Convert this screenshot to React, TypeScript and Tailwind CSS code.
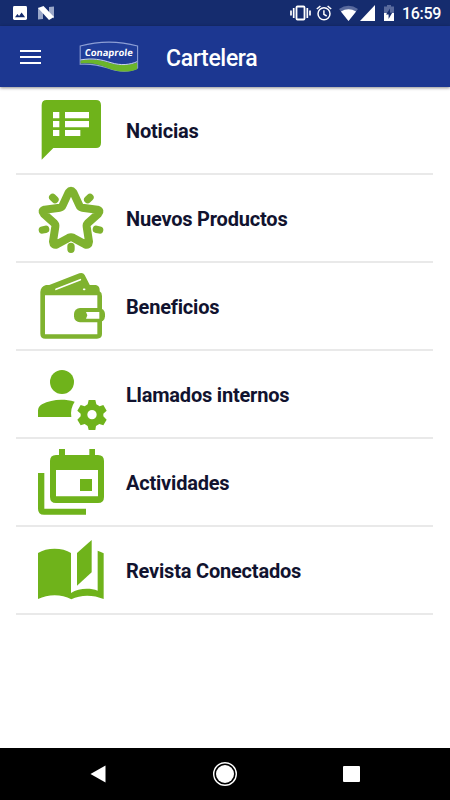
import type { ReactNode } from "react";

interface MenuItem {
  label: string;
  icon: ReactNode;
}

const GREEN = "#6fb31b";
const OLIVE = "#7fb22f";

function NewsIcon() {
  return (
    <g fill={GREEN}>
      <path d="M80 30H228Q243 30 243 46V158Q243 174 228 174H100L65 209V46Q65 30 80 30Z" />
      <path
        fill="#fff"
        d="M99 66h19v19H99zM135 66h72v19h-72zM99 93h19v19H99zM135 93h72v19h-72zM99 120h19v18H99zM135 120h46v18h-46z"
      />
    </g>
  );
}

function StarIcon() {
  return (
    <g fill="none" stroke={OLIVE} strokeLinecap="round" strokeLinejoin="round">
      <path
        strokeWidth="24"
        d="M146 43Q153 34 160 43L178 82Q180 88 187 89L232 95Q243 98 235 107L203 136Q199 140 200 146L207 191Q206 204 195 199L159 179Q153 176 147 179L111 199Q100 204 99 191L106 146Q107 140 103 136L71 107Q63 98 74 95L119 89Q126 88 128 82Z"
      />
      <path
        strokeWidth="22"
        d="M98 58l7 7M210 58l-7 7M67 156l10-2M239 156l-10-2M153 205v9"
      />
    </g>
  );
}

function WalletIcon() {
  return (
    <g fill={OLIVE}>
      <path
        fillRule="evenodd"
        d="M78 57H228Q239 60 239 72V76Q246 80 246 90V204Q246 218 231 218H76Q61 218 61 203V78Q62 62 78 57ZM75 88V205H232V88Z"
      />
      <path d="M80 60L178 22Q189 18 194 27L212 62L232 80H80Z" />
      <path
        d="M108 70L181 41M191 70h3"
        fill="none"
        stroke="#fff"
        strokeWidth="5"
        strokeLinecap="round"
      />
      <rect x="162" y="126" width="93" height="43" rx="18" />
      <path fill="#fff" d="M198 138h40v20h-40l4-10z" />
    </g>
  );
}

function StaffIcon() {
  return (
    <g fill={GREEN}>
      <circle cx="126" cy="84" r="36" />
      <path d="M54 189V170Q54 158 66 151C94 136 130 133 164 143Q150 164 154 189Z" />
      <path
        fillRule="evenodd"
        d="M206 138h20l3 13 10 6 11-4 10 17-10 9v8l10 10-10 17-12-4-10 6-2 12h-20l-3-12-9-6-12 4-10-17 10-10v-8l-10-9 10-17 12 4 9-6ZM216 168a14 14 0 1 0 0 28a14 14 0 1 0 0-28Z"
      />
    </g>
  );
}

function EventsIcon() {
  return (
    <g fill={GREEN}>
      <path
        fillRule="evenodd"
        d="M117 21h18v18h73V21h17v18h9Q252 39 252 57V165Q252 183 234 183H108Q90 183 90 165V57Q90 39 108 39h9ZM108 84v79H234V84Z"
      />
      <path d="M180 111h36v36h-36z" />
      <path d="M54 93h19v107H198v18H72Q54 218 54 200Z" />
    </g>
  );
}

function MagazineIcon() {
  return (
    <g fill={GREEN}>
      <path d="M54 69C80 52 128 52 153 69V189C176 174 210 173 233 182V62Q243 65 251 70V207C220 194 182 193 154 208C124 191 84 192 54 207Z" />
      <path d="M171 69L215 30V127L171 167Z" />
    </g>
  );
}

const items: MenuItem[] = [
  { label: "Noticias", icon: <NewsIcon /> },
  { label: "Nuevos Productos", icon: <StarIcon /> },
  { label: "Beneficios", icon: <WalletIcon /> },
  { label: "Llamados internos", icon: <StaffIcon /> },
  { label: "Actividades", icon: <EventsIcon /> },
  { label: "Revista Conectados", icon: <MagazineIcon /> },
];

function StatusBar() {
  return (
    <div className="flex h-[26px] items-center bg-[#152c6e] text-white">
      <svg className="ml-[13px] h-[14px] w-[14px]" viewBox="0 0 14 14">
        <rect width="14" height="14" rx="1.4" fill="#fff" />
        <path d="M2 11.3 4.4 8l1.7 2.1L8.6 6.6l3.5 4.7Z" fill="#152c6e" />
      </svg>
      <svg className="ml-[11px] h-[14px] w-4" viewBox="0 0 16 14">
        <path d="M0 1.5 5 5v8L0 13.5ZM11 1l5-.5v12L11 8Z" fill="#9aa7c8" />
        <path d="M0 2 5.5 0 16 11 11 14Z" fill="#fff" />
      </svg>
      <svg
        className="ml-auto h-4 w-[21px]"
        viewBox="0 0 21 16"
        fill="none"
        stroke="#fff"
      >
        <rect x="6.5" y="1.5" width="8" height="13" rx="1" strokeWidth="1.8" />
        <path d="M3.7 3v10M17.3 3v10M1 5.5v5M20 5.5v5" strokeWidth="1.7" />
      </svg>
      <svg
        className="ml-[5px] h-4 w-4"
        viewBox="0 0 16 16"
        fill="none"
        stroke="#fff"
        strokeWidth="1.5"
      >
        <circle cx="8" cy="8.8" r="6" />
        <path d="M7.9 5.3v4l2.8 1.7M.8 4 4.4 1M15.2 4 11.6 1" />
      </svg>
      <svg className="ml-[7px] h-4 w-[19px]" viewBox="0 0 19 16">
        <path d="M9.5 16 0 4Q9.5-2.5 19 4Z" fill="#596a9d" />
        <path d="M9.5 16 1.9 6.5Q9.5 1.8 17.1 6.5Z" fill="#fff" />
      </svg>
      <svg className="ml-[2px] h-4 w-[15px]" viewBox="0 0 15 16">
        <path d="M15 0v16H0Z" fill="#fff" />
      </svg>
      <svg className="ml-[9px] h-4 w-[10px]" viewBox="0 0 10 16">
        <path d="M3 0h4v1.6h3V8H0V1.6h3Z" fill="#596a9d" />
        <path d="M0 8h10v8H0Z" fill="#fff" />
        <path d="M6 3.5 2 9.5h2.6V14L8.2 7.7H6Z" fill="#152c6e" />
      </svg>
      <span className="mr-[9px] ml-[8px] w-[39px] pt-[2px] text-[16px] leading-none font-medium tracking-[-0.02em] whitespace-nowrap">
        16:59
      </span>
    </div>
  );
}

function Logo() {
  return (
    <svg className="ml-[38px] h-[32px] w-[60px]" viewBox="0 0 60 32">
      <path
        d="M1.2 5Q30-2.8 58.6 5V27C50 31.5 40 31 29 27C18 23.5 10 22.6 1.2 23.3Z"
        fill="#203d99"
        stroke="#8d9fd5"
        strokeWidth="1.1"
      />
      <path
        d="M1.6 19.5C14 17.5 22 19 32 22.3C42 25 51 24 58.2 21.5V28.3C49 32 39 31 29 27.2C18 22.8 10 21.8 1.6 22.6Z"
        fill="#6bb52b"
      />
      <path
        d="M1.6 18.9C14 16.9 22 18.5 32 21.7C42 24.8 51 23.8 58 20.7"
        fill="none"
        stroke="#dfe7f4"
        strokeWidth="0.9"
      />
      <text
        x="7"
        y="14.7"
        textLength="48"
        lengthAdjust="spacingAndGlyphs"
        transform="skewX(-6)"
        fill="#fff"
        className="font-['Open_Sans',sans-serif] text-[9.6px] font-bold"
      >
        Conaprole
      </text>
    </svg>
  );
}

function AppBar() {
  return (
    <header className="relative flex h-[61px] items-center bg-[#1c3791] pt-px text-white shadow-[0_1px_3px_rgba(0,0,0,0.45)]">
      <div className="ml-5 flex w-[21px] flex-col gap-1">
        <span className="h-[2px] bg-white" />
        <span className="h-[2px] bg-white" />
        <span className="h-[2px] bg-white" />
      </div>
      <Logo />
      <h1 className="ml-[27px] pt-[2px] text-[23px] leading-none font-medium tracking-[-0.015em]">
        Cartelera
      </h1>
    </header>
  );
}

function MenuRow({ label, icon }: MenuItem) {
  return (
    <li className="flex h-[88px] border-b-2 border-[#e9e9e9]">
      <svg className="mt-2 ml-[19px] h-[76px] w-[76px]" viewBox="45 15 228 228">
        {icon}
      </svg>
      <span className="ml-[15px] self-center pt-[2px] text-[20px] leading-6 font-bold tracking-[-0.01em] text-[#11132f]">
        {label}
      </span>
    </li>
  );
}

function NavigationBar() {
  return (
    <nav className="flex h-[52px] items-center bg-black">
      <svg className="ml-[90px] h-[18px] w-4" viewBox="0 0 16 18">
        <path d="M15.5.5v17L.5 9Z" fill="#fff" />
      </svg>
      <svg className="ml-[106px] h-[26px] w-[26px]" viewBox="0 0 26 26">
        <circle cx="13" cy="13" r="11.3" fill="none" stroke="#fff" strokeWidth="1.4" />
        <circle cx="13" cy="13" r="9" fill="#fff" />
      </svg>
      <span className="ml-[105px] h-4 w-[17px] rounded-[1px] bg-white" />
    </nav>
  );
}

export default function App() {
  return (
    <div className="flex h-[800px] w-[450px] flex-col overflow-hidden bg-white font-['Roboto',sans-serif]">
      <StatusBar />
      <AppBar />
      <main className="flex-1 px-4">
        <ul className="mr-px">
          {items.map((item) => (
            <MenuRow key={item.label} {...item} />
          ))}
        </ul>
      </main>
      <NavigationBar />
    </div>
  );
}
